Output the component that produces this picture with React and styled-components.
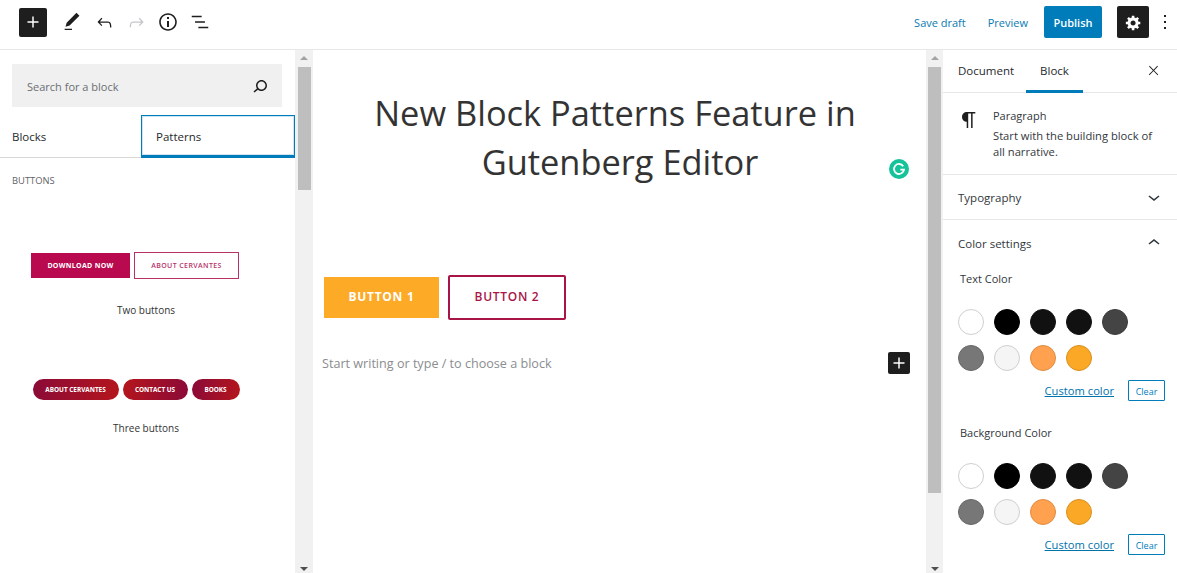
import React from "react";
import styled, { createGlobalStyle } from "styled-components";

const GlobalStyle = createGlobalStyle`
  html, body {
    margin: 0;
    padding: 0;
    background: #fff;
  }
  body {
    font-family: "Open Sans", "Noto Sans", sans-serif;
    color: #32373c;
  }
  * {
    box-sizing: border-box;
  }
`;

const Page = styled.div`
  width: 1177px;
  height: 573px;
  display: flex;
  flex-direction: column;
  overflow: hidden;
`;

/* top bar */
const TopBar = styled.header`
  height: 50px;
  flex: none;
  display: flex;
  align-items: center;
  justify-content: space-between;
  padding: 0 0 5px 19px;
  border-bottom: 1px solid #e7e7e7;
`;
const BarGroup = styled.div`
  display: flex;
  align-items: center;
`;
const InserterButton = styled.div`
  width: 28px;
  height: 29px;
  margin-right: 9px;
  background: #1e1e1e;
  border-radius: 2px;
  color: #fff;
  display: flex;
  align-items: center;
  justify-content: center;
`;
const ToolIcon = styled.div`
  width: 32px;
  height: 32px;
  display: flex;
  align-items: center;
  justify-content: center;
  color: ${(p) => (p.$off ? "#c4c6c8" : "#1e1e1e")};
`;
const TextLink = styled.span`
  font-size: 11px;
  color: #0a7ab3;
  margin-right: ${(p) => p.$gap}px;
`;
const PublishButton = styled.div`
  width: 58px;
  height: 32px;
  margin-right: 15px;
  background: #007cba;
  border-radius: 2px;
  color: #fff;
  font-size: 11px;
  font-weight: 600;
  display: flex;
  align-items: center;
  justify-content: center;
`;
const SettingsButton = styled.div`
  width: 32px;
  height: 32px;
  margin-right: 4px;
  background: #1e1e1e;
  border-radius: 2px;
  color: #fff;
  display: flex;
  align-items: center;
  justify-content: center;
`;
const MoreIcon = styled.div`
  width: 24px;
  height: 32px;
  display: flex;
  align-items: center;
  justify-content: center;
  color: #1e1e1e;
`;

const Body = styled.div`
  flex: 1;
  min-height: 0;
  display: flex;
`;

/* scrollbars */
const Rail = styled.div`
  width: ${(p) => p.$width}px;
  flex: none;
  background: #f1f1f1;
  display: flex;
  flex-direction: column;
  align-items: center;
  position: relative;
`;
const Thumb = styled.div`
  width: 13px;
  height: ${(p) => p.$length}px;
  margin-top: 17px;
  background: #bebebe;
`;
const ArrowUp = styled.div`
  position: absolute;
  top: 6px;
  width: 0;
  height: 0;
  border-left: 4px solid transparent;
  border-right: 4px solid transparent;
  border-bottom: 4px solid #a3a3a3;
`;
const ArrowDown = styled.div`
  position: absolute;
  bottom: 2px;
  width: 0;
  height: 0;
  border-left: 4px solid transparent;
  border-right: 4px solid transparent;
  border-top: 4px solid #505050;
`;

/* block library */
const Library = styled.aside`
  width: 295px;
  flex: none;
  display: flex;
  flex-direction: column;
`;
const SearchBox = styled.div`
  width: 270px;
  height: 43px;
  margin: 14px 0 8px 12px;
  padding: 1px 10px 0 15px;
  background: #f0f0f0;
  display: flex;
  align-items: center;
  justify-content: space-between;
  font-size: 11px;
  color: #6b6f73;
`;
const SearchIcon = styled.div`
  display: flex;
  color: #1e1e1e;
`;
const LibraryTabs = styled.div`
  height: 43px;
  display: flex;
  border-bottom: 1px solid #d8d8d8;
`;
const LibraryTab = styled.div`
  width: ${(p) => p.$width}px;
  height: ${(p) => (p.$active ? 43 : 42)}px;
  padding-left: ${(p) => (p.$active ? 14 : 12)}px;
  padding-top: ${(p) => (p.$active ? 1 : 0)}px;
  display: flex;
  align-items: center;
  font-size: 11.5px;
  color: #26292c;
  ${(p) =>
    p.$active &&
    `
    border: 1px solid #007cba;
    border-bottom: 3px solid #007cba;
    box-shadow: inset 0 0 0 1px #cfe6f2;
  `}
`;
const GroupTitle = styled.div`
  margin: 17px 0 0 12px;
  font-size: 9.4px;
  line-height: 12px;
  color: #5f6367;
`;
const Pattern = styled.div`
  margin-top: ${(p) => p.$top}px;
  display: flex;
  flex-direction: column;
  align-items: center;
  width: 292px;
`;
const PreviewRow = styled.div`
  margin-right: ${(p) => p.$inset}px;
  display: flex;
  align-items: center;
  gap: 4px;
`;
const SolidPreview = styled.div`
  width: 99px;
  height: 25px;
  background: #b9094f;
  color: #fff;
  font-size: 7px;
  font-weight: 700;
  letter-spacing: 0.3px;
  display: flex;
  align-items: center;
  justify-content: center;
`;
const OutlinePreview = styled.div`
  width: 105px;
  height: 27px;
  border: 1px solid #b8326a;
  color: #b8326a;
  font-size: 7px;
  font-weight: 600;
  letter-spacing: 0.4px;
  display: flex;
  align-items: center;
  justify-content: center;
`;
const PillPreview = styled.div`
  width: ${(p) => p.$width}px;
  height: 21px;
  border-radius: 11px;
  background: linear-gradient(${(p) => p.$angle}deg, #8a0a38, #b5161c);
  color: #fff;
  font-size: 6.4px;
  font-weight: 700;
  white-space: nowrap;
  display: flex;
  align-items: center;
  justify-content: center;
`;
const PatternLabel = styled.div`
  margin-top: ${(p) => p.$top}px;
  font-size: 10px;
  line-height: 14px;
  color: #333;
`;

/* editor canvas */
const Canvas = styled.main`
  width: 613px;
  flex: none;
  padding: 38px 0 0 9px;
  position: relative;
`;
const Title = styled.h1`
  width: 586px;
  margin: 0;
  font-size: 34.4px;
  font-weight: 400;
  line-height: 49px;
  text-align: center;
  color: #333;
`;
const TitleLine = styled.span`
  display: block;
  padding-left: ${(p) => p.$indent}px;
`;
const ButtonRow = styled.div`
  margin: 89px 0 0 2px;
  display: flex;
  align-items: center;
  gap: 9px;
`;
const FilledButton = styled.div`
  width: 115px;
  height: 41px;
  padding-bottom: 2px;
  background: #fdaa27;
  color: #fff;
  font-size: 12px;
  font-weight: 700;
  letter-spacing: 0.7px;
  display: flex;
  align-items: center;
  justify-content: center;
`;
const BorderedButton = styled.div`
  width: 118px;
  height: 45px;
  padding-bottom: 2px;
  border: 2px solid #a81446;
  border-radius: 2px;
  color: #a81446;
  font-size: 12px;
  font-weight: 600;
  letter-spacing: 0.7px;
  display: flex;
  align-items: center;
  justify-content: center;
`;
const PlaceholderRow = styled.div`
  margin-top: 32px;
  width: 588px;
  height: 22px;
  display: flex;
  align-items: center;
  justify-content: space-between;
  font-size: 12.6px;
  color: #8a8d90;
`;
const SmallInserter = styled.div`
  width: 22px;
  height: 22px;
  background: #1e1e1e;
  border-radius: 2px;
  color: #fff;
  display: flex;
  align-items: center;
  justify-content: center;
`;
const GrammarlyBadge = styled.div`
  position: absolute;
  left: 576px;
  top: 109px;
  width: 20px;
  height: 20px;
  border-radius: 50%;
  background: #15c39a;
  display: flex;
  align-items: center;
  justify-content: center;
`;

/* settings sidebar */
const Sidebar = styled.aside`
  flex: 1;
  min-width: 0;
  display: flex;
  flex-direction: column;
`;
const SidebarTabs = styled.div`
  height: 43px;
  flex: none;
  display: flex;
  padding-left: 15px;
  border-bottom: 1px solid #e7e7e7;
  position: relative;
`;
const SidebarTab = styled.div`
  height: 43px;
  margin-right: ${(p) => p.$gap}px;
  padding: ${(p) => (p.$active ? "0 14px" : "0")};
  display: flex;
  align-items: center;
  font-size: 11.5px;
  color: #26292c;
  border-bottom: 3px solid ${(p) => (p.$active ? "#007cba" : "transparent")};
`;
const CloseIcon = styled.div`
  position: absolute;
  right: 16px;
  top: 13px;
  color: #1e1e1e;
  display: flex;
`;
const BlockCard = styled.div`
  height: 82px;
  flex: none;
  padding: 15px 22px 0 14px;
  display: flex;
  border-bottom: 1px solid #e7e7e7;
`;
const CardIcon = styled.div`
  width: 36px;
  flex: none;
  color: #1e1e1e;
`;
const CardName = styled.div`
  font-size: 11px;
  line-height: 16px;
  color: #32373c;
`;
const CardText = styled.div`
  margin-top: 4px;
  font-size: 11.2px;
  line-height: 16px;
  color: #32373c;
`;
const PanelHead = styled.div`
  height: ${(p) => p.$height}px;
  flex: none;
  padding: 0 11px 0 15px;
  display: flex;
  align-items: center;
  justify-content: space-between;
  font-size: 11.5px;
  color: #32373c;
  ${(p) => p.$line && "border-bottom: 1px solid #e7e7e7;"}
`;
const ColorLabel = styled.div`
  margin: ${(p) => p.$top}px 0 0 17px;
  font-size: 11px;
  line-height: 16px;
  color: #32373c;
`;
const SwatchGrid = styled.div`
  margin: 22px 0 0 15px;
  display: grid;
  grid-template-columns: repeat(5, 26px);
  column-gap: 10px;
  row-gap: 10px;
`;
const Swatch = styled.div`
  width: 26px;
  height: 26px;
  border-radius: 50%;
  background: ${(p) => p.$color};
  border: 1px solid ${(p) => p.$edge};
`;
const ColorActions = styled.div`
  margin: 9px 12px 0 0;
  display: flex;
  justify-content: flex-end;
  align-items: center;
  gap: 14px;
`;
const CustomLink = styled.span`
  font-size: 11.2px;
  color: #0073aa;
  text-decoration: underline;
`;
const ClearButton = styled.div`
  width: 37px;
  height: 21px;
  border: 1px solid #007cba;
  border-radius: 1px;
  color: #007cba;
  font-size: 9px;
  padding-top: 1px;
  display: flex;
  align-items: center;
  justify-content: center;
`;

const Icon = ({ d, size = 24, box = 24 }) => (
  <svg width={size} height={size} viewBox={`0 0 ${box} ${box}`} fill="currentColor">
    <path d={d} />
  </svg>
);

const icons = {
  plus: "M18 11.2h-5.2V6h-1.6v5.2H6v1.6h5.2V18h1.6v-5.2H18z",
  pencil: "M20.1 5.1L16.9 2 6.2 12.7l-1.3 4.4 4.5-1.3L20.1 5.1zM4 20.8h8v-1.5H4v1.5z",
  undo: "M18.3 11.7c-.6-.6-1.4-.9-2.3-.9H6.7l2.9-3.3-1.1-1-4.5 5L8.5 16l1-1-2.7-2.7H16c.5 0 .9.2 1.3.5 1 1 1 3.4 1 4.5v.3h1.5v-.2c0-1.5 0-4.3-1.5-5.7z",
  redo: "M15.6 6.5l-1.1 1 2.9 3.3H8c-.9 0-1.7.3-2.3.9-1.4 1.5-1.4 4.2-1.4 5.6v.2h1.5v-.3c0-1.1 0-3.5 1-4.5.3-.3.7-.5 1.3-.5h9.2L14.5 15l1.1 1.1 4.6-4.6-4.6-5z",
  info: "M12 3.2c-4.8 0-8.8 3.9-8.8 8.8 0 4.8 3.9 8.8 8.8 8.8 4.8 0 8.8-3.9 8.8-8.8 0-4.8-4-8.8-8.8-8.8zm0 16c-4 0-7.2-3.3-7.2-7.2C4.8 8 8 4.8 12 4.8s7.2 3.3 7.2 7.2c0 4-3.2 7.2-7.2 7.2zM11 17h2v-6h-2v6zm0-8h2V7h-2v2z",
  list: "M13.8 5.2H3v1.5h10.8V5.2zm-3.6 12v1.5H21v-1.5H10.2zm7.2-6H6.6v1.5h10.8v-1.5z",
  search: "M13.5 6C10.5 6 8 8.5 8 11.5c0 1.1.3 2.1.9 3l-3.4 3 1 1.1 3.4-2.9c1 .9 2.2 1.4 3.6 1.4 3 0 5.5-2.5 5.5-5.5C19 8.5 16.5 6 13.5 6zm0 9.5c-2.2 0-4-1.8-4-4s1.8-4 4-4 4 1.8 4 4-1.8 4-4 4z",
  cog: "M18 12h-2.18c-.17.7-.44 1.35-.81 1.93l1.54 1.54-2.1 2.1-1.54-1.54c-.58.36-1.23.63-1.91.79V19H8v-2.18c-.68-.16-1.33-.43-1.91-.79l-1.54 1.54-2.12-2.12 1.54-1.54c-.36-.58-.63-1.23-.79-1.91H1V9.03h2.17c.16-.7.44-1.35.8-1.94L2.43 5.55l2.1-2.1 1.54 1.54c.58-.37 1.24-.64 1.93-.81V2h3v2.18c.68.16 1.33.43 1.91.79l1.54-1.54 2.12 2.12-1.54 1.54c.36.59.64 1.24.8 1.94H18V12zm-8.5 1.5c1.66 0 3-1.34 3-3s-1.34-3-3-3-3 1.34-3 3 1.34 3 3 3z",
  more: "M13 19h-2v-2h2v2zm0-6h-2v-2h2v2zm0-6h-2V5h2v2z",
  close: "M13 11.8l6.1-6.3-1-1-6.1 6.2-6.1-6.2-1 1 6.1 6.3-6.5 6.7 1 1 6.5-6.6 6.5 6.6 1-1z",
  down: "M17.5 11.6L12 16l-5.5-4.4.9-1.2L12 14l4.5-3.6 1 1.2z",
  up: "M6.5 12.4L12 8l5.5 4.4-.9 1.2L12 10l-4.5 3.6-1-1.2z",
  paragraph: "M18.3 4H9.9v-.1l-.9.2c-2.3.4-4 2.4-4 4.8s1.7 4.4 4 4.8l.7.1V20h1.5V5.5h2.9V20h1.5V5.5h2.7V4z",
};

const swatches = [
  ["#ffffff", "#cfcfcf"],
  ["#000000", "#000000"],
  ["#111111", "#111111"],
  ["#111111", "#111111"],
  ["#444444", "#3a3a3a"],
  ["#777777", "#666666"],
  ["#f5f5f5", "#cfcfcf"],
  ["#ffa14f", "#e08b3f"],
  ["#faa825", "#d98f1c"],
];

const ColorSection = ({ label, labelTop }) => (
  <>
    <ColorLabel $top={labelTop}>{label}</ColorLabel>
    <SwatchGrid>
      {swatches.map(([color, edge], i) => (
        <Swatch key={i} $color={color} $edge={edge} />
      ))}
    </SwatchGrid>
    <ColorActions>
      <CustomLink>Custom color</CustomLink>
      <ClearButton>Clear</ClearButton>
    </ColorActions>
  </>
);

export default function App() {
  return (
    <Page>
      <GlobalStyle />
      <TopBar>
        <BarGroup>
          <InserterButton>
            <Icon d={icons.plus} size={22} />
          </InserterButton>
          <ToolIcon>
            <Icon d={icons.pencil} size={22} />
          </ToolIcon>
          <ToolIcon>
            <Icon d={icons.undo} size={21} />
          </ToolIcon>
          <ToolIcon $off>
            <Icon d={icons.redo} size={21} />
          </ToolIcon>
          <ToolIcon>
            <Icon d={icons.info} />
          </ToolIcon>
          <ToolIcon>
            <Icon d={icons.list} size={22} />
          </ToolIcon>
        </BarGroup>
        <BarGroup>
          <TextLink $gap={22}>Save draft</TextLink>
          <TextLink $gap={16}>Preview</TextLink>
          <PublishButton>Publish</PublishButton>
          <SettingsButton>
            <Icon d={icons.cog} size={17} box={20} />
          </SettingsButton>
          <MoreIcon>
            <Icon d={icons.more} />
          </MoreIcon>
        </BarGroup>
      </TopBar>
      <Body>
        <Library>
          <SearchBox>
            Search for a block
            <SearchIcon>
              <Icon d={icons.search} />
            </SearchIcon>
          </SearchBox>
          <LibraryTabs>
            <LibraryTab $width={141}>Blocks</LibraryTab>
            <LibraryTab $width={154} $active>
              Patterns
            </LibraryTab>
          </LibraryTabs>
          <GroupTitle>BUTTONS</GroupTitle>
          <Pattern $top={65}>
            <PreviewRow $inset={22}>
              <SolidPreview>DOWNLOAD NOW</SolidPreview>
              <OutlinePreview>ABOUT CERVANTES</OutlinePreview>
            </PreviewRow>
            <PatternLabel $top={24}>Two buttons</PatternLabel>
          </Pattern>
          <Pattern $top={62}>
            <PreviewRow $inset={20}>
              <PillPreview $width={86} $angle={100}>ABOUT CERVANTES</PillPreview>
              <PillPreview $width={65} $angle={280}>CONTACT US</PillPreview>
              <PillPreview $width={48} $angle={100}>BOOKS</PillPreview>
            </PreviewRow>
            <PatternLabel $top={21}>Three buttons</PatternLabel>
          </Pattern>
        </Library>
        <Rail $width={18}>
          <ArrowUp />
          <Thumb $length={123} />
          <ArrowDown />
        </Rail>
        <Canvas>
          <Title>
            <TitleLine $indent={0}>New Block Patterns Feature in</TitleLine>
            <TitleLine $indent={10}>Gutenberg Editor</TitleLine>
          </Title>
          <ButtonRow>
            <FilledButton>BUTTON 1</FilledButton>
            <BorderedButton>BUTTON 2</BorderedButton>
          </ButtonRow>
          <PlaceholderRow>
            Start writing or type / to choose a block
            <SmallInserter>
              <Icon d={icons.plus} size={22} />
            </SmallInserter>
          </PlaceholderRow>
          <GrammarlyBadge>
            <svg width="14" height="14" viewBox="0 0 14 14" fill="none">
              <path
                d="M11.2 4.2A5 5 0 1 0 12 7.6H8.4"
                stroke="#fff"
                strokeWidth="1.8"
              />
            </svg>
          </GrammarlyBadge>
        </Canvas>
        <Rail $width={17}>
          <ArrowUp />
          <Thumb $length={426} />
          <ArrowDown />
        </Rail>
        <Sidebar>
          <SidebarTabs>
            <SidebarTab $gap={12}>Document</SidebarTab>
            <SidebarTab $gap={0} $active>
              Block
            </SidebarTab>
            <CloseIcon>
              <Icon d={icons.close} size={15} />
            </CloseIcon>
          </SidebarTabs>
          <BlockCard>
            <CardIcon>
              <Icon d={icons.paragraph} />
            </CardIcon>
            <div>
              <CardName>Paragraph</CardName>
              <CardText>
                Start with the building block of all narrative.
              </CardText>
            </div>
          </BlockCard>
          <PanelHead $height={45} $line>
            Typography
            <Icon d={icons.down} />
          </PanelHead>
          <PanelHead $height={46}>
            Color settings
            <Icon d={icons.up} />
          </PanelHead>
          <ColorSection label="Text Color" labelTop={5} />
          <ColorSection label="Background Color" labelTop={24} />
        </Sidebar>
      </Body>
    </Page>
  );
}
